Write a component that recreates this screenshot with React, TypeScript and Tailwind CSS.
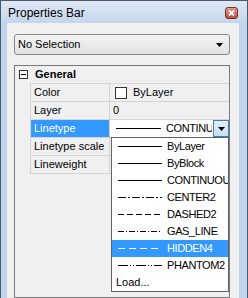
import React from "react";

const font = { fontFamily: '"Liberation Sans", Arial, sans-serif' };

interface LineItem {
  name: string;
  dash?: string;
}

const items: LineItem[] = [
  { name: "ByLayer" },
  { name: "ByBlock" },
  { name: "CONTINUOUS" },
  { name: "CENTER2", dash: "8 2 2 2" },
  { name: "DASHED2", dash: "6 3" },
  { name: "GAS_LINE", dash: "6 2 1 2" },
  { name: "HIDDEN4", dash: "7 4" },
  { name: "PHANTOM2", dash: "10 2 1 2 1 2" },
];

function LineSample({ dash, color = "#000", width = 44 }: { dash?: string; color?: string; width?: number }) {
  return (
    <svg width={width} height="3" className="shrink-0">
      <line x1="0" y1="1.5" x2={width} y2="1.5" stroke={color} strokeWidth="1" strokeDasharray={dash} />
    </svg>
  );
}

function Arrow() {
  return (
    <svg width="7" height="4" viewBox="0 0 7 4">
      <path d="M0 0 H7 L3.5 4 Z" fill="#000" />
    </svg>
  );
}

const rows = ["Color", "Layer", "Linetype", "Linetype scale", "Lineweight"];

export default function App() {
  return (
    <div
      className="flex h-[298px] w-[248px] flex-col overflow-hidden border-x border-t border-[#4a5a6c] bg-[#bfd3ea] text-[11px] text-black"
      style={font}
    >
      {/* title bar */}
      <div className="flex h-[22px] shrink-0 items-center bg-gradient-to-b from-[#dfe9f5] to-[#c3d6ec] pl-[7px]">
        <span className="pt-[2px] text-[12px]">Properties Bar</span>
        <div className="ml-auto mr-[9px] mt-[2px] flex h-[12px] w-[13px] items-center justify-center rounded-[3px] border border-[#7a2f28] bg-gradient-to-b from-[#e09a8f] to-[#c24a3c]">
          <svg width="7" height="6" viewBox="0 0 7 6">
            <path d="M1 0.5 L6 5.5 M6 0.5 L1 5.5" stroke="#fff" strokeWidth="1.8" />
          </svg>
        </div>
      </div>

      {/* client area */}
      <div className="ml-[6px] flex w-[232px] flex-1 flex-col bg-[#f0f0f0] px-[7px] pt-[11px]">
        <div className="flex h-[21px] w-[216px] items-center rounded-[3px] border border-[#8a8a8a] bg-gradient-to-b from-[#f3f3f3] to-[#e2e2e2] pl-[3px] pr-[6px]">
          <span>No Selection</span>
          <span className="ml-auto">
            <Arrow />
          </span>
        </div>

        <div className="relative mt-[10px] w-[216px] flex-1 border border-[#7a7a7a]">
          {/* group header */}
          <div className="flex h-[17px] items-center">
            <div className="ml-[4px] flex h-[9px] w-[9px] items-center justify-center border border-[#333] bg-white">
              <div className="h-px w-[5px] bg-black" />
            </div>
            <span className="ml-[7px] font-bold">General</span>
          </div>

          {/* property grid */}
          <div className="ml-[15px] border-t border-[#d4d4d4]">
            {rows.map((label) => {
              const selected = label === "Linetype";
              return (
                <div key={label} className="flex h-[18px] border-b border-[#d4d4d4]">
                  <div
                    className={
                      selected
                        ? "flex w-[80px] items-center border-x border-[#d4d4d4] bg-[#3399ff] pl-[3px] text-white"
                        : "flex w-[80px] items-center border-x border-[#d4d4d4] pl-[3px]"
                    }
                  >
                    {label}
                  </div>
                  <div className="flex flex-1 items-center">
                    {label === "Color" && (
                      <>
                        <div className="ml-[5px] h-[12px] w-[12px] border border-[#333] bg-white" />
                        <span className="ml-[6px]">ByLayer</span>
                      </>
                    )}
                    {label === "Layer" && <span className="ml-[3px]">0</span>}
                    {selected && (
                      <div className="flex h-full w-full items-center bg-white pl-[6px]">
                        <LineSample width={45} />
                        <span className="ml-[5px] w-[46px] overflow-hidden whitespace-nowrap tracking-[-0.4px]">
                          CONTINUOUS
                        </span>
                        <div className="ml-auto flex h-[17px] w-[16px] items-center justify-center border border-[#3c7fb1] bg-gradient-to-b from-[#e5f1fb] to-[#c4e0f7]">
                          <Arrow />
                        </div>
                      </div>
                    )}
                  </div>
                </div>
              );
            })}
          </div>

          {/* open linetype list */}
          <div className="absolute left-[96px] top-[71px] w-[118px] border border-[#646464] bg-white">
            {items.map((it) => {
              const hl = it.name === "HIDDEN4";
              return (
                <div
                  key={it.name}
                  className={
                    hl
                      ? "flex h-[17px] items-center overflow-hidden whitespace-nowrap bg-[#3399ff] pl-[6px] text-white"
                      : "flex h-[17px] items-center overflow-hidden whitespace-nowrap pl-[6px]"
                  }
                >
                  <LineSample dash={it.dash} color={hl ? "#fff" : "#000"} />
                  <span className="ml-[5px] tracking-[-0.4px]">{it.name}</span>
                </div>
              );
            })}
            <div className="flex h-[17px] items-center pl-[4px]">Load...</div>
          </div>
        </div>
      </div>
    </div>
  );
}
